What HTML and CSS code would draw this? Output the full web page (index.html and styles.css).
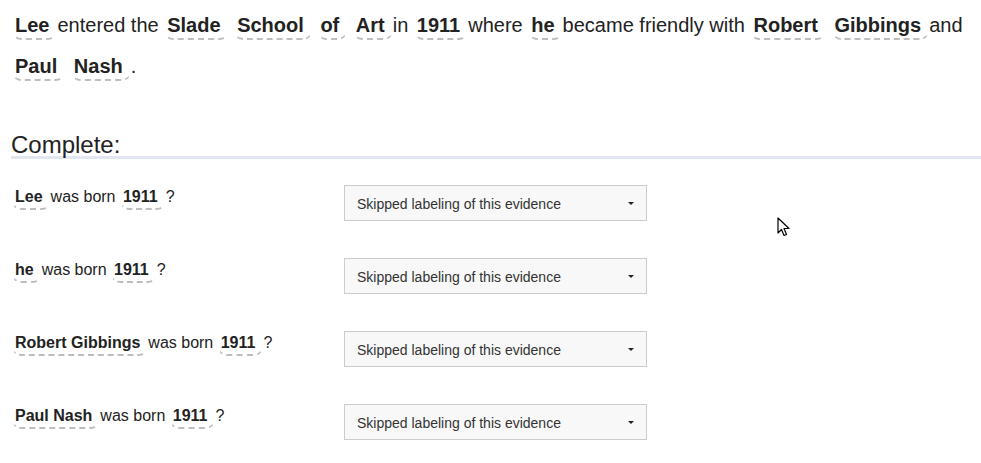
FILE: index.html
```html
<!DOCTYPE html>
<html>
<head>
<meta charset="utf-8">
<link rel="stylesheet" href="styles.css">
</head>
<body>
<div class="page">
  <p class="sentence"><span class="tok">Lee</span>entered the <span class="tok">Slade</span> <span class="tok">School</span> <span class="tok">of</span> <span class="tok">Art</span>in <span class="tok">1911</span>where <span class="tok">he</span>became friendly with <span class="tok">Robert</span> <span class="tok">Gibbings</span>and <span class="tok">Paul</span> <span class="tok">Nash</span>.</p>

  <h2 class="heading">Complete:</h2>

  <div class="rows">
    <div class="row">
      <div class="q"><span class="tok">Lee</span>was born <span class="tok">1911</span>?</div>
      <div class="select"><span>Skipped labeling of this evidence</span><i class="caret"></i></div>
    </div>
    <div class="row">
      <div class="q"><span class="tok">he</span>was born <span class="tok">1911</span>?</div>
      <div class="select"><span>Skipped labeling of this evidence</span><i class="caret"></i></div>
    </div>
    <div class="row">
      <div class="q"><span class="tok">Robert Gibbings</span>was born <span class="tok">1911</span>?</div>
      <div class="select"><span>Skipped labeling of this evidence</span><i class="caret"></i></div>
    </div>
    <div class="row">
      <div class="q"><span class="tok">Paul Nash</span>was born <span class="tok">1911</span>?</div>
      <div class="select"><span>Skipped labeling of this evidence</span><i class="caret"></i></div>
    </div>
  </div>

  <svg class="cursor" width="14" height="22" viewBox="0 0 14 22"><path d="M1 1 L1 16 L4.5 12.5 L7 18.5 L9.5 17.5 L7 11.5 L12 11.5 Z" fill="#fff" stroke="#000" stroke-width="1.2" stroke-linejoin="round"/></svg>
</div>
</body>
</html>
```

FILE: styles.css
```css
html, body {
  margin: 0;
  padding: 0;
  background: #fff;
}
body {
  font-family: "Liberation Sans", Arial, sans-serif;
  color: #222;
}
.page {
  position: relative;
  padding-left: 11px;
  padding-top: 5px;
  overflow: hidden;
  height: 463px;
  box-sizing: border-box;
}
.sentence {
  margin: 0;
  font-size: 20px;
  line-height: 41px;
  padding-left: 1px;
}
.tok {
  font-weight: bold;
  padding: 0 7px 2px 2px;
  border: 1px solid transparent;
  border-top: none;
  border-bottom: 2px dashed #bdbdbd;
  border-radius: 0 0 9px 9px;
}
.heading {
  margin: 47px -20px 0 0;
  font-size: 24px;
  font-weight: normal;
  line-height: 22px;
  border-bottom: 3px solid #e0e7ef;
}
.rows {
  margin-top: 26px;
  display: flex;
  flex-direction: column;
  gap: 37px;
}
.row {
  display: flex;
  align-items: flex-start;
}
.q {
  width: 333px;
  font-size: 16px;
  line-height: 22px;
  padding-left: 1px;
  padding-top: 1px;
  box-sizing: border-box;
}
.q .tok {
  padding-bottom: 3px;
}
.select {
  width: 303px;
  height: 36px;
  box-sizing: border-box;
  border: 1px solid #cccccc;
  background: #f8f8f8;
  display: flex;
  align-items: center;
  justify-content: space-between;
  padding: 1px 12px 0 12px;
  font-size: 14px;
  color: #333;
}
.caret {
  width: 0;
  height: 0;
  border-left: 3px solid transparent;
  border-right: 3px solid transparent;
  border-top: 3px solid #222;
}
.cursor {
  position: absolute;
  left: 777px;
  top: 217px;
}
```
